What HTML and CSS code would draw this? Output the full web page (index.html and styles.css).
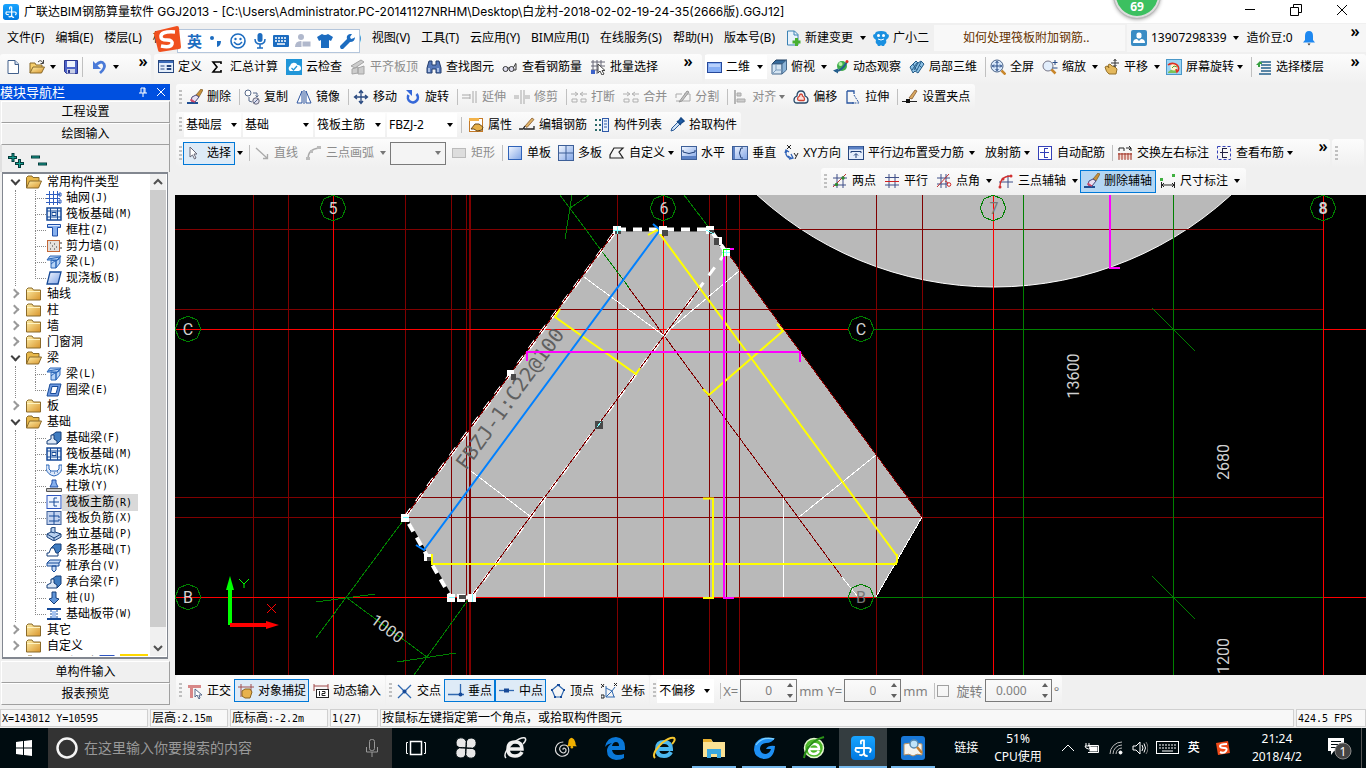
FILE: index.html
```html
<!DOCTYPE html>
<html lang="zh-CN">
<head>
<meta charset="utf-8">
<title>广联达BIM钢筋算量软件 GGJ2013</title>
<link rel="stylesheet" href="styles.css">
</head>
<body>
<svg class="sprite" aria-hidden="true">
  <defs>
    <linearGradient id="gold" x1="0" y1="0" x2="1" y2="1"><stop offset="0" stop-color="#fff0a8"/><stop offset="1" stop-color="#d8942c"/></linearGradient>
    <linearGradient id="blue" x1="0" y1="0" x2="1" y2="1"><stop offset="0" stop-color="#f4f8ff"/><stop offset="1" stop-color="#7fa4e6"/></linearGradient>
    <linearGradient id="app" x1="0" y1="0" x2="0" y2="1"><stop offset="0" stop-color="#18a4ff"/><stop offset="1" stop-color="#0078e0"/></linearGradient>
  </defs>
  <symbol id="applogo" viewBox="0 0 24 24"><rect width="24" height="24" rx="4" fill="url(#app)"/><path d="M13 4.500V17a3 3 0 0 0 3 3M5 12h13M13 4.500q-4-1-3 3M5 12q-2 4 3 4M18 12q3 1 1 4M13 17q-1 3-4 2" fill="none" stroke="#fff" stroke-width="1.800" stroke-linecap="round"/></symbol>
  <symbol id="new" viewBox="0 0 16 16"><path d="M3 1.500h7l3.500 3.500v9.500h-10.500z" fill="#fff" stroke="#43618c"/><path d="M10 1.500v4h3.500" fill="#cfdcf0" stroke="#43618c"/></symbol>
  <symbol id="open" viewBox="0 0 16 16"><path d="M1 14V4h5l1 2h6v3" fill="#f6cf6c" stroke="#8a6a2a"/><path d="M1 14l3-6h11.500l-3 6z" fill="url(#gold)" stroke="#8a6a2a"/><path d="M9 3q3-3 5 1M14.500 1v3.500h-3" fill="none" stroke="#444"/></symbol>
  <symbol id="save" viewBox="0 0 16 16"><path d="M1.500 1.500h13v13h-11l-2-2z" fill="#4d63c8" stroke="#29348c"/><rect x="4" y="2" width="8" height="6" fill="#eef2fc"/><rect x="4" y="10" width="8" height="4.500" fill="#c9cfe6"/><rect x="5" y="11" width="2" height="3" fill="#29348c"/></symbol>
  <symbol id="undo" viewBox="0 0 16 16"><path d="M4 6q5-5 8-1q2 4-4 9" fill="none" stroke="#4a7ad8" stroke-width="2.800"/><path d="M1 2v8h8z" fill="#4a7ad8"/></symbol>
  <symbol id="define" viewBox="0 0 16 16"><rect x=".5" y="1.500" width="15" height="12" fill="#e4eefb" stroke="#27477f"/><rect x="1" y="2" width="14" height="2" fill="#3c6bb8"/><path d="M2.500 7h4M2.500 10h4M9 6.500h4v1h-4zM9 9.500h4v1h-4z" stroke="#27477f"/></symbol>
  <symbol id="sum" viewBox="0 0 16 16"><path d="M11 5V3H3l4 5-4 5h8v-2" fill="none" stroke="#000" stroke-width="1.600"/></symbol>
  <symbol id="cloud" viewBox="0 0 16 16"><rect width="16" height="16" fill="#2196d8"/><path d="M4 12a3 3 0 0 1 0-5a4 4 0 0 1 7.500-1a3 3 0 0 1 1 6z" fill="#fff"/><path d="M5.500 9l2 2 3.500-4" fill="none" stroke="#2196d8" stroke-width="1.300"/></symbol>
  <symbol id="align3d" viewBox="0 0 16 16"><path d="M1 7l10-6 3 2-9 6zM2 15V10l6-2v6zM8 15V9l6-2v8z" fill="#ccc" stroke="#a4a4a4"/></symbol>
  <symbol id="bino" viewBox="0 0 16 16"><path d="M3 2h3v4h4V2h3l2 7v5h-5v-4H6v4H1V9z" fill="#5678b8" stroke="#233c6c"/><path d="M3 9v4M12 9v4" stroke="#c6d6f2" stroke-width="1.500"/></symbol>
  <symbol id="glasses" viewBox="0 0 16 16"><circle cx="3.500" cy="10" r="2.500" fill="#dde" stroke="#333"/><circle cx="9.500" cy="10" r="2.500" fill="#dde" stroke="#333"/><path d="M6 9h1M11.500 8.500L14 4M12 11h2V5" fill="none" stroke="#333"/></symbol>
  <symbol id="batch" viewBox="0 0 16 16"><path d="M1 3h14M1 7h14M1 11h9M3 1v14M7 1v14M11 1v6" stroke="#667"/><rect x="1" y="11" width="4" height="4" fill="#3d62c8"/><path d="M8 5v9l2-2 2 4 2-1-2-3.500h3z" fill="#fff" stroke="#444"/></symbol>
  <symbol id="rect2d" viewBox="0 0 16 16"><rect x=".5" y="3.500" width="14" height="10" fill="#86aef4" stroke="#26489a"/><path d="M2 5h11v3H2z" fill="#b8d0fb"/></symbol>
  <symbol id="cube" viewBox="0 0 16 16"><path d="M1 5l4-4h10.500L11 5z" fill="#376b9c" stroke="#1e3e60"/><path d="M1 5h10v10H1z" fill="#d4e4f2" stroke="#46698c"/><path d="M11 5l4.500-4v10L11 15z" fill="#8cb4d8" stroke="#46698c"/><path d="M5 5v6l-4 4M5 11h6" fill="none" stroke="#7a9cbc"/></symbol>
  <symbol id="orbit" viewBox="0 0 16 16"><circle cx="9" cy="7" r="5" fill="#3fae4a"/><circle cx="7.500" cy="5" r="2" fill="#b8efaa"/><path d="M2 12Q8 13 14 3" fill="none" stroke="#245e8c" stroke-width="2"/><path d="M0 11.500l5-2v5z" fill="#245e8c"/><circle cx="14" cy="2.500" r="1.500" fill="#e03020"/></symbol>
  <symbol id="local3d" viewBox="0 0 16 16"><path d="M1 8l6-6 2 2 3-2 3 3-6 9-3-2-2 2z" fill="#8cc0e4" stroke="#235a86"/><path d="M4 5l4 7M9 4l-4 7M12 3l-4 8M3 11l5-7M10 6l3 3" stroke="#235a86"/></symbol>
  <symbol id="full" viewBox="0 0 16 16"><circle cx="7" cy="7" r="6" fill="#d8e8fa" stroke="#4b6488"/><path d="M11.500 11.500l4 4" stroke="#c8862a" stroke-width="2.500"/><path d="M7 2v10M2 7h10M5.500 4L7 2.500 8.500 4M5.500 10L7 11.500 8.500 10M4 5.500L2.500 7 4 8.500M10 5.500L11.500 7 10 8.500" fill="none" stroke="#274a86"/></symbol>
  <symbol id="zoomi" viewBox="0 0 16 16"><circle cx="6" cy="7" r="5" fill="#e2eefc" stroke="#778"/><path d="M9.500 10.500l4 4" stroke="#c8862a" stroke-width="2.500"/><path d="M13 1v5M10.500 3.500h5M10.500 9h5" stroke="#274a86"/></symbol>
  <symbol id="pan" viewBox="0 0 16 16"><path d="M1 8l2-1 2 2-1-3 2-1 2 2 3 1 2 2-1 5H5q-3-2-4-7z" fill="#e4b85c" stroke="#94702a"/><path d="M11 0v8M7 4h8" stroke="#333"/><path d="M9.500 2L11 .5 12.500 2M9.500 6L11 7.500 12.500 6" fill="none" stroke="#333"/></symbol>
  <symbol id="scrrot" viewBox="0 0 16 16"><rect x=".5" y=".5" width="15" height="15" fill="#9bd4f4" stroke="#4a98c8"/><path d="M2 13q4-4 8-2v3H2z" fill="#7cc25a"/><circle cx="8" cy="8" r="3.500" fill="#fff6d0"/><path d="M2 6a6 5 0 1 1 9 7l-1-3" fill="none" stroke="#e03020" stroke-width="1.600"/><path d="M6 9l2-2 3 1" stroke="#5a9a3a" fill="none"/></symbol>
  <symbol id="floor" viewBox="0 0 16 16"><path d="M5 3h10M5 6h10M5 9h10M5 12h10M3 15h12" stroke="#26618c" stroke-width="1.500"/><path d="M0 6l4-4 2 2v1H4v3H2V6z" fill="#37a040"/></symbol>
  <symbol id="docplus" viewBox="0 0 16 16"><path d="M2.500 1h7L13 4.500V15H2.500z" fill="#e8f2fb" stroke="#3a82b4"/><path d="M9 1v4h4" fill="none" stroke="#3a82b4"/><path d="M10 8h3v2.500H15.500v3H13V16h-3v-2.500H7.500v-3H10z" fill="#48b030"/></symbol>
  <symbol id="mascot" viewBox="0 0 16 16"><path d="M0 6q0-2 2-2 0-3 6-3t6 3q2 0 2 2t-3 4q1 3-1 4l-1 2H9l-1-1-1 1H5l-1-2q-2-1-1-4-3-2-3-4z" fill="#1a90e0"/><circle cx="5.500" cy="5.500" r="1.500" fill="#fff"/><circle cx="10.500" cy="5.500" r="1.500" fill="#fff"/><path d="M5 9q3 2 6 0" fill="none" stroke="#fff"/></symbol>
  <symbol id="user" viewBox="0 0 16 16"><rect width="16" height="16" rx="2" fill="#3a8cc4"/><rect x="5.500" y="2.500" width="5" height="6" rx="2" fill="#fff"/><path d="M2 13q0-4 4-4l2 2 2-2q4 0 4 4z" fill="#fff"/></symbol>
  <symbol id="bell" viewBox="0 0 14 16"><path d="M7 1q-4 0-4 5v4l-2 2.500h12L11 10V6q0-5-4-5z" fill="#1e88f0"/><path d="M5.500 13.500h3L7 15.500z" fill="#333"/></symbol>
  <symbol id="brush" viewBox="0 0 16 16"><path d="M0 14h11" stroke="#1f4f94" stroke-width="2"/><path d="M9 6l5-6 2 1-4 7z" fill="#c89038" stroke="#6a4a1a" stroke-width=".6"/><path d="M5 8l4-2 3 2-4 5-4-1z" fill="#e8e0f2" stroke="#4a4a7a"/><path d="M4 10l4 3-4-1z" fill="#d04868" stroke="#d04868"/></symbol>
  <symbol id="copy" viewBox="0 0 16 16"><circle cx="4" cy="4" r="3" fill="#fff" stroke="#56698a"/><circle cx="12" cy="12" r="3.200" fill="#dde" stroke="#667"/><path d="M9 4h4v4M11.500 6.500L13 8l1.500-1.500M5 8v4l3 1M10 14l4-4" fill="none" stroke="#56698a"/></symbol>
  <symbol id="mirror" viewBox="0 0 16 16"><path d="M6 2v12H1zM10 2v12h5z" fill="#fff" stroke="#2f56a0"/><path d="M8 1v14" stroke="#2f56a0"/></symbol>
  <symbol id="move" viewBox="0 0 16 16"><path d="M8 2v12M2 8h12M6 4l2-2.500L10 4M6 12l2 2.500 2-2.500M4 6L1.500 8 4 10M12 6l2.500 2-2.500 2" fill="none" stroke="#2a4a80" stroke-width="1.300"/></symbol>
  <symbol id="rot" viewBox="0 0 16 16"><path d="M3.500 6a5 5 0 1 0 8-1" fill="none" stroke="#3668d8" stroke-width="2.600"/><path d="M1 1h6v6z" fill="#3668d8"/></symbol>
  <symbol id="extend" viewBox="0 0 16 16"><path d="M0 6h8M0 9h8M8 5v5M11 2v12M14 2v12" stroke="#a8a8a8" fill="none"/></symbol>
  <symbol id="trim" viewBox="0 0 16 16"><path d="M0 7h5M0 9h5M11 7h5M11 9h5M7 1v14M10 1v14" stroke="#a8a8a8"/></symbol>
  <symbol id="brk" viewBox="0 0 16 16"><path d="M0 5h6M10 5h6M4 3l3 2-3 2M12 3L9 5l3 2M1 10h5v3H1zM10 10h5v3h-5z" fill="none" stroke="#b0b0b0"/></symbol>
  <symbol id="split" viewBox="0 0 16 16"><path d="M1 9V5h6M9 5h6v7H1" fill="none" stroke="#aaa"/><path d="M4 13l8-11 2 1-7 9z" fill="#c4c4c4" stroke="#999"/></symbol>
  <symbol id="alignl" viewBox="0 0 16 16"><path d="M3 1v14" stroke="#a0a0a0" stroke-width="1.500"/><path d="M5 4h4v3H5zM5 10h8v3H5z" fill="#ccc" stroke="#aaa"/></symbol>
  <symbol id="offset" viewBox="0 0 16 16"><path d="M1 11q0-3 3-4q0-5 4-5t4 5q3 1 3 4t-3 3H4q-3 0-3-3z" fill="#f2f6fa" stroke="#2a4a6a" stroke-width="1.300"/><path d="M4.500 10q0-2 2-3q0-2 1.500-2t1.500 2q2 1 2 3t-2 1.500h-3q-2 0-2-1.500z" fill="#fbe0da" stroke="#d04030" stroke-width="1.300"/></symbol>
  <symbol id="stretch" viewBox="0 0 16 16"><path d="M2 2h7v3M2 2v12h7" fill="none" stroke="#2a56a0" stroke-width="1.300"/><path d="M9 6l5 8H7" fill="none" stroke="#2a56a0" stroke-dasharray="2 1"/></symbol>
  <symbol id="grip" viewBox="0 0 16 16"><path d="M0 12.500h4M7 12.500h8" stroke="#222"/><rect x="4" y="10" width="4" height="4" fill="#111"/><path d="M7 9l6-8 2 1-5 8z" fill="#d8a860" stroke="#7a4a20" stroke-width=".7"/></symbol>
  <symbol id="prop" viewBox="0 0 16 16"><rect x="1.500" y="1.500" width="13" height="13" fill="#fff" stroke="#c47a28"/><rect x="1" y="1" width="10" height="3" fill="#f2b24a"/><path d="M3 12l4-5 4 0 4 3-1 3-5 1-3-2z" fill="#e6b048" stroke="#6a4a1a"/></symbol>
  <symbol id="editbar" viewBox="0 0 16 16"><path d="M0 12h4l2-3M5 12h10V9" fill="none" stroke="#222" stroke-width="1.300"/><path d="M6 9l7-8 2 1.500-7 8z" fill="#e0b468" stroke="#7a4a20" stroke-width=".7"/></symbol>
  <symbol id="list" viewBox="0 0 16 16"><path d="M1 3h2M5 3h2M1 8h2M5 8h2M1 13h2M5 13h2" stroke="#2b6a6a" stroke-width="2"/><rect x="8.500" y="1.500" width="6" height="13" fill="#e8f0fb" stroke="#2f5aa8"/><path d="M10 4h3M10 7h3M10 10h3" stroke="#2f5aa8"/></symbol>
  <symbol id="pick" viewBox="0 0 16 16"><path d="M2 14l1-3 6-6 2 2-6 6z" fill="#cfe2f6" stroke="#2a5a98"/><path d="M8 4l4 4M9 5l3-4 3 3-4 3z" fill="#1f5faa" stroke="#174a88" stroke-width="1.500"/></symbol>
  <symbol id="cursor" viewBox="0 0 16 16"><path d="M3 2v10l2.500-2 2 4 1.500-1-2-4H10z" fill="#fff" stroke="#667"/></symbol>
  <symbol id="line" viewBox="0 0 16 16"><path d="M2 3l11 10M13.500 9v4.500H9" fill="none" stroke="#aaa" stroke-width="1.300"/></symbol>
  <symbol id="arc" viewBox="0 0 16 16"><path d="M2 14Q2 4 13 3" fill="none" stroke="#aaa" stroke-width="1.500"/><path d="M0 12h4v3H0zM4 5h3v3H4zM11 1h4v3h-4z" fill="#bbb"/></symbol>
  <symbol id="rectg" viewBox="0 0 16 16"><rect x="1.500" y="3.500" width="13" height="9" fill="#ddd" stroke="#bbb"/></symbol>
  <symbol id="single" viewBox="0 0 16 16"><rect x="1.500" y="1.500" width="13" height="13" fill="url(#blue)" stroke="#2f62b8"/></symbol>
  <symbol id="multi" viewBox="0 0 16 16"><rect x=".5" y=".5" width="15" height="15" fill="url(#blue)" stroke="#3d5f98"/><path d="M8 1v14M1 8h14" stroke="#3d5f98"/></symbol>
  <symbol id="poly" viewBox="0 0 16 16"><path d="M1 13V10l4-7h9l-4 4 4 6z" fill="none" stroke="#222" stroke-width="1.200"/></symbol>
  <symbol id="horiz" viewBox="0 0 16 16"><rect x=".5" y="1.500" width="15" height="13" fill="url(#blue)" stroke="#3d5f98"/><path d="M2 5v2q6 3 12 0V5" fill="none" stroke="#1f3f78"/><path d="M1 11h14v3H1z" fill="#5a80c4"/></symbol>
  <symbol id="vert" viewBox="0 0 16 16"><rect x=".5" y="1.500" width="15" height="13" fill="url(#blue)" stroke="#3d5f98"/><path d="M11 3H9q-3 5 0 10h2" fill="none" stroke="#1f3f78"/><path d="M2 2v12" stroke="#5a80c4" stroke-width="2"/></symbol>
  <symbol id="xy" viewBox="0 0 16 16"><path d="M4 0l4 4M8 0L4 4M11 8l2 3M15 8l-3 6" stroke="#222" fill="none"/><path d="M4 6Q1 9 6 13M2 8l1-3 3 2M8 13l-3-2M8 9l2 4-4 1" fill="none" stroke="#2f62b8" stroke-width="1.300"/></symbol>
  <symbol id="parside" viewBox="0 0 16 16"><rect x=".5" y="1.500" width="15" height="13" fill="#e4edfb" stroke="#27477f"/><path d="M1 3h14" stroke="#5a80c4" stroke-width="3"/><path d="M3 8V6.500h10V8M8 13V9M6 10.500L8 8.500l2 2" fill="none" stroke="#1f3f78"/></symbol>
  <symbol id="auto" viewBox="0 0 16 16"><rect x="1.500" y="1.500" width="13" height="13" fill="#fff" stroke="#3340b8"/><path d="M7.500 3v10M3 7.500h9M8 3.500h3M8 12.500h3" stroke="#3340b8" fill="none"/></symbol>
  <symbol id="viewbar" viewBox="0 0 16 16"><rect x="1.500" y="1.500" width="13" height="13" fill="none" stroke="#3340b8" stroke-dasharray="3 2"/><path d="M6.500 3v10M4 7.500h8M7 3.500h4M7 12.500h4" stroke="#224" fill="none"/></symbol>
  <symbol id="swap" viewBox="0 0 16 16"><path d="M2 6V3h5v3M9 3h5v3M12 1l2 2-2 2" fill="none" stroke="#222"/><path d="M1 8h14v6H1z" fill="#f4d8d0"/><path d="M2 8v7M5 8v7M8 8v7M11 8v7M14 8v7M1 9h14" stroke="#a03428"/></symbol>
  <symbol id="twopt" viewBox="0 0 16 16"><path d="M5 1v14M11 3v12M1 5h14M1 12h13" stroke="#3f4f88"/><path d="M1 14L14 1" stroke="#c03030"/><circle cx="4.500" cy="11.500" r="1.700" fill="#2f8a30"/><circle cx="11" cy="5" r="1.700" fill="#2f8a30"/></symbol>
  <symbol id="para" viewBox="0 0 16 16"><path d="M5 1v14M11 1v14M1 4.500h14M1 12h14" stroke="#3f4f88"/><path d="M1 8.500h14" stroke="#d02020"/></symbol>
  <symbol id="ptang" viewBox="0 0 16 16"><path d="M5 1v14M10 1v14M1 5h13M1 11h13" stroke="#3f4f88"/><path d="M1 14L13 1M9 8q4 1 3 4" stroke="#c03030" fill="none"/><circle cx="13" cy="11.500" r="1.800" fill="#fff" stroke="#d02020"/></symbol>
  <symbol id="threept" viewBox="0 0 16 16"><path d="M10 2v13M1 9h14" stroke="#3f4f88"/><path d="M2 14Q2 3 13 3" fill="none" stroke="#d03030" stroke-width="1.300"/><circle cx="2" cy="14" r="1.500" fill="#d03030"/><circle cx="5" cy="6" r="1.500" fill="#d03030"/><circle cx="13" cy="3" r="1.500" fill="#d03030"/></symbol>
  <symbol id="dim" viewBox="0 0 16 16"><path d="M1.500 9v6M14.500 9v6M2 12h12M4 10l-2 2 2 2M12 10l2 2-2 2" fill="none" stroke="#222"/><rect x="0" y="5" width="3" height="3" fill="#40b040"/><rect x="12" y="1" width="3" height="3" fill="#40b040"/></symbol>
  <symbol id="ortho" viewBox="0 0 16 16"><path d="M1 2h13v3H6v10H3V5H1z" fill="#d88888"/><path d="M8 6v8l2-2 2 4 1-1-1-3h3z" fill="#fff" stroke="#56698a"/></symbol>
  <symbol id="snap" viewBox="0 0 16 16"><path d="M3 1v13M13 1v10M0 4h16" stroke="#a05050"/><path d="M4 13V8l3-2 5 0 2 3-2 6H7z" fill="#e8b24c" stroke="#8a6420"/></symbol>
  <symbol id="dyn" viewBox="0 0 16 16"><path d="M1 1v7M15 1v7M1 3h14" stroke="#a04848"/><rect x="3.500" y="6.500" width="12" height="8" fill="#fff" stroke="#222"/><path d="M6.500 8v5M9 8.500h3v2H9v2h3.500" fill="none" stroke="#222"/></symbol>
  <symbol id="cross" viewBox="0 0 16 16"><path d="M1 2l13 13M14 2L1 15" stroke="#2f68b0" stroke-width="1.300"/><circle cx="7.500" cy="8.500" r="2" fill="#174a98"/></symbol>
  <symbol id="perp" viewBox="0 0 16 16"><path d="M0 11.500h16M12.500 1v10" stroke="#2f68b0" stroke-width="1.300"/><circle cx="12.500" cy="11.500" r="2" fill="#174a98"/></symbol>
  <symbol id="mid" viewBox="0 0 16 16"><path d="M0 7.500h15" stroke="#2f68b0" stroke-width="1.300"/><rect x="5" y="5.500" width="5" height="4" fill="#174a98"/></symbol>
  <symbol id="vertex" viewBox="0 0 16 16"><path d="M8 2l6 5-3 7H5L2 7z" fill="none" stroke="#2f68b0" stroke-width="1.200"/><path d="M7 1h3v2H7zM1 6h2v2H1zM13 6h2v2h-2zM4 13h2v2H4zM10 13h2v2h-2z" fill="#174a98"/></symbol>
  <symbol id="coord" viewBox="0 0 16 16"><path d="M5 3v11h9M5 5l6 3 3-4M5 14l6-6M11 8l2 6" fill="none" stroke="#2f68b0"/><path d="M0 1l3 3M3 1L0 5M13 0l3 3M16 0l-3 3M0 12h3v3H0z" stroke="#222" fill="none"/></symbol>
  <symbol id="folder" viewBox="0 0 16 14"><path d="M.5 13V2.500L2 1h4l1.500 2h7v10z" fill="url(#gold)" stroke="#8a6a2a"/><path d="M1 4.500h13" stroke="#fff3c0"/></symbol>
  <symbol id="folderopen" viewBox="0 0 16 14"><path d="M.5 13V2.500L2 1h4l1 1.500h6V6" fill="#e8b84a" stroke="#8a6a2a"/><path d="M.5 13l3-7h12l-3 7z" fill="url(#gold)" stroke="#8a6a2a"/></symbol>
  <symbol id="t-axis" viewBox="0 0 16 14"><path d="M3.500 0v14M7.500 0v14M11.500 0v14M0 3.500h14M0 7.500h14M0 11.500h14" stroke="#2f5ec0"/><path d="M13 2h2v3h-2zM13 9h2v3h-2z" fill="none" stroke="#2f5ec0"/></symbol>
  <symbol id="t-raft" viewBox="0 0 16 14"><rect x="1" y="1" width="14" height="12" fill="#e6f0fc" stroke="#174a98" stroke-width="1.500"/><path d="M4.500 1v12M11.500 1v12M1 4h14M1 10h14" stroke="#174a98"/><rect x="6" y="5.500" width="4" height="3" fill="#fff" stroke="#174a98"/></symbol>
  <symbol id="t-col" viewBox="0 0 16 14"><path d="M1.500 1.500h13v3h-3v8.500h-5V4.500h-5z" fill="#86b0ee" stroke="#1f4fa8"/><path d="M2 2.500h12" stroke="#e0ecff"/></symbol>
  <symbol id="t-wall" viewBox="0 0 16 14"><rect x="1.500" y="1.500" width="12" height="11" fill="#e4e0dc" stroke="#c46838"/><path d="M4 4h1M8 5h1M6 7h1M10 8h1M4 10h1M8 10h1M14 4h2M14 9h2" stroke="#333"/></symbol>
  <symbol id="t-beam" viewBox="0 0 16 14"><path d="M1 5l3-4h11l-3 4zM5 5v8h5V6zM10 6l4-4v6l-4 5z" fill="#b8d4f6" stroke="#2a66b8"/><path d="M5 9l5-4M2 4l12-2" fill="none" stroke="#2a66b8"/></symbol>
  <symbol id="t-slab" viewBox="0 0 16 14"><path d="M4 1h11l-3 12H1z" fill="url(#blue)" stroke="#174a98" stroke-width="1.300"/></symbol>
  <symbol id="t-ring" viewBox="0 0 16 14"><path d="M4 1h11l-3 12H1z" fill="#6f9ae0" stroke="#174a98"/><path d="M6 3.500h6l-2 7H4.500z" fill="#fff" stroke="#174a98"/></symbol>
  <symbol id="t-fbeam" viewBox="0 0 16 14"><path d="M5 5l5-4h5v8l-4 4z" fill="#3f7cc0" stroke="#173f78"/><path d="M1 13v-3l4-2V4h3v4l3 2v3z" fill="#dce8f6" stroke="#173f78"/></symbol>
  <symbol id="t-pit" viewBox="0 0 16 14"><path d="M0 2h3v4l2 2h6l2-2V2h3v4q-2 6-8 7Q2 12 0 6z" fill="#dce8fa" stroke="#2a66b8"/><path d="M4 9h1M8 10h1M11 9h1" stroke="#174a98"/></symbol>
  <symbol id="t-pier" viewBox="0 0 16 14"><path d="M6 1h4v3l2 4H4l2-4z" fill="#86b0ee" stroke="#1f4fa8"/><path d="M.5 9.500h15v3H.5z" fill="#c8c8c8" stroke="#555"/></symbol>
  <symbol id="t-main" viewBox="0 0 16 14"><rect x="1" y=".5" width="14" height="13" fill="#eef4ff" stroke="#2f56c0"/><path d="M8 3v8h3M8 3h3M3 7h10" fill="none" stroke="#174a98"/></symbol>
  <symbol id="t-neg" viewBox="0 0 16 14"><rect x="1" y=".5" width="14" height="13" fill="#c4d4f0" stroke="#3d5f98"/><path d="M8 1v12M3 5h10v2M3 10h10V8" fill="none" stroke="#174a98"/></symbol>
  <symbol id="t-iso" viewBox="0 0 16 14"><path d="M1 7l4-2V1l4-1v5l6 2v3l-7 4-7-4z" fill="#b8d0ee" stroke="#173f78"/><path d="M1 7l7 4 7-4M8 11v3M5 5l4 1" fill="none" stroke="#173f78"/></symbol>
  <symbol id="t-strip" viewBox="0 0 16 14"><path d="M5 5l4-4h6v6l-4 4" fill="#3f7cc0" stroke="#173f78"/><path d="M1 13v-3h2l2-5h3l2 5h2v3z" fill="#fff" stroke="#173f78"/></symbol>
  <symbol id="t-cap" viewBox="0 0 16 14"><path d="M1 4l3-3h11l-2 3v3H1zM6 7h4v4l-2 2-2-2z" fill="#c8dcf6" stroke="#174a98"/><path d="M1 4h12" stroke="#174a98"/></symbol>
  <symbol id="t-pile" viewBox="0 0 16 14"><path d="M6 1h4v6l3 1-5 5-5-5 3-1z" fill="#5f94d8" stroke="#173f78"/></symbol>
  <symbol id="t-band" viewBox="0 0 16 14"><path d="M1 2h14M1 12h14" stroke="#174a98" stroke-width="2"/><path d="M5 3v8M11 3v8" stroke="#174a98" stroke-dasharray="2 1"/><path d="M6 4h4v7H6z" fill="#a8c4f0"/></symbol>
</svg>

<header class="titlebar">
  <svg class="i"><use href="#applogo"/></svg>
  <h1>广联达BIM钢筋算量软件 GGJ2013 - [C:\Users\Administrator.PC-20141127NRHM\Desktop\白龙村-2018-02-02-19-24-35(2666版).GGJ12]</h1>
  <div class="ball">69</div>
  <button class="win" aria-label="最小化"><svg viewBox="0 0 12 12"><path d="M1 5.500h10"/></svg></button>
  <button class="win" aria-label="还原"><svg viewBox="0 0 12 12"><path d="M3.500 3V.5h8v8H9M.5 3.500h8v8h-8z"/></svg></button>
  <button class="win" aria-label="关闭"><svg viewBox="0 0 12 12"><path d="M1 1l10 10M11 1L1 11"/></svg></button>
</header>

<nav class="menubar">
  <button>文件(F)</button><button>编辑(E)</button><button>楼层(L)</button><button>构件(N)</button><button>绘图(D)</button><button>修改(M)</button><button>钢筋量(Q)</button><button>视图(V)</button><button>工具(T)</button><button>云应用(Y)</button><button>BIM应用(I)</button><button>在线服务(S)</button><button>帮助(H)</button><button>版本号(B)</button>
  <button class="t"><svg class="i"><use href="#docplus"/></svg>新建变更</button><button class="dd" aria-label="展开"></button>
  <button class="t"><svg class="i"><use href="#mascot"/></svg>广小二</button>
  <a class="tip" href="#">如何处理筏板附加钢筋..</a>
  <div class="account">
    <button class="t"><svg class="i"><use href="#user"/></svg>13907298339</button><button class="dd" aria-label="展开"></button>
    <span class="beans">造价豆:0</span>
    <button class="bellbtn" aria-label="通知"><svg class="i"><use href="#bell"/></svg></button>
    <button class="more">»</button>
  </div>
  <div class="ime">
    <svg class="imelogo" viewBox="0 0 28 28"><path d="M3 6L24 1q2 0 2 2l2 19q0 2-2 2L7 27q-2 0-2-2L1 9q0-2 2-3z" fill="#f0501e"/><path d="M22 7Q7 6 8 12q0 3 6 3t5 4q-1 4-11 2" fill="none" stroke="#fff" stroke-width="3.500"/></svg>
    <b>英</b>
    <svg viewBox="0 0 16 16"><circle cx="4" cy="5" r="2"/><path d="M9 8h4q0 5-4 6z"/></svg>
    <svg viewBox="0 0 16 16"><circle cx="8" cy="8" r="7" fill="none" stroke="#1c6cc0" stroke-width="1.600"/><circle cx="5.500" cy="6" r="1.200"/><circle cx="10.500" cy="6" r="1.200"/><path d="M4 9q4 5 8 0" fill="none" stroke="#1c6cc0" stroke-width="1.500"/></svg>
    <svg viewBox="0 0 16 16"><rect x="5.500" y="0" width="5" height="9" rx="2.500"/><path d="M3 6q0 5 5 5t5-5M8 11v4M5 15h6" fill="none" stroke="#1c6cc0" stroke-width="1.500"/></svg>
    <svg viewBox="0 0 16 16"><rect x="0" y="2" width="16" height="12" rx="1"/><path d="M2 5h12M2 8h12" stroke="#fff" stroke-width="1.500" stroke-dasharray="2 1"/><path d="M4 11h8" stroke="#fff" stroke-width="1.500"/></svg>
    <svg viewBox="0 0 16 16" class="pale"><circle cx="6" cy="4" r="3"/><path d="M0 14q0-6 6-6l3 1v5z"/><rect x="7" y="8" width="9" height="6" stroke="#fff"/></svg>
    <svg viewBox="0 0 16 16"><path d="M5 1q3 2 6 0l5 3-2 4-2-1v8H4V7L2 8 0 4z"/></svg>
    <svg viewBox="0 0 16 16"><path d="M1 13l7-7q-1-4 3-5l2 0-2 3 1 2 3-1 1-1q0 5-5 5l-7 7q-3 1-3-3z"/></svg>
  </div>
</nav>

<div class="maintools">
  <div class="tb file">
    <button class="t" aria-label="新建"><svg class="i"><use href="#new"/></svg></button>
    <button class="t" aria-label="打开"><svg class="i"><use href="#open"/></svg></button><button class="dd" aria-label="展开"></button>
    <button class="t" aria-label="保存"><svg class="i"><use href="#save"/></svg></button>
    <i class="sep"></i>
    <button class="t" aria-label="撤销"><svg class="i"><use href="#undo"/></svg></button><button class="dd" aria-label="展开"></button>
    <button class="more">»</button>
  </div>
  <div class="tb calc">
    <button class="t"><svg class="i"><use href="#define"/></svg>定义</button>
    <button class="t"><svg class="i"><use href="#sum"/></svg>汇总计算</button>
    <button class="t"><svg class="i"><use href="#cloud"/></svg>云检查</button>
    <button class="t" disabled><svg class="i"><use href="#align3d"/></svg>平齐板顶</button>
    <button class="t"><svg class="i"><use href="#bino"/></svg>查找图元</button>
    <button class="t"><svg class="i"><use href="#glasses"/></svg>查看钢筋量</button>
    <button class="t"><svg class="i"><use href="#batch"/></svg>批量选择</button>
    <button class="more">»</button>
  </div>
  <div class="tb view">
    <label class="combo dim"><svg class="i"><use href="#rect2d"/></svg><select aria-label="视图维度"><option>二维</option></select></label>
    <button class="t"><svg class="i"><use href="#cube"/></svg>俯视</button><button class="dd" aria-label="展开"></button>
    <button class="t"><svg class="i"><use href="#orbit"/></svg>动态观察</button>
    <button class="t"><svg class="i"><use href="#local3d"/></svg>局部三维</button>
    <i class="sep"></i>
    <button class="t"><svg class="i"><use href="#full"/></svg>全屏</button>
    <button class="t"><svg class="i"><use href="#zoomi"/></svg>缩放</button><button class="dd" aria-label="展开"></button>
    <button class="t"><svg class="i"><use href="#pan"/></svg>平移</button><button class="dd" aria-label="展开"></button>
    <button class="t drop"><svg class="i"><use href="#scrrot"/></svg>屏幕旋转</button>
    <i class="sep"></i>
    <button class="t"><svg class="i"><use href="#floor"/></svg>选择楼层</button>
    <button class="more">»</button>
  </div>
</div>

<main class="work">
  <aside class="side">
    <header>模块导航栏
      <svg viewBox="0 0 10 10" class="pin"><path d="M3 1h4v5M3 1v5M1 6h8M5 6v4M6 1v5"/></svg>
      <svg viewBox="0 0 10 10"><path d="M1 1l8 8M9 1L1 9"/></svg>
    </header>
    <button class="sec">工程设置</button>
    <button class="sec">绘图输入</button>
    <div class="expand">
      <button aria-label="全部展开"><svg viewBox="0 0 16 16"><path d="M5 0v9M0 4.500h9M11.500 6v9M7 10.500h9" stroke="#053c3c" stroke-width="3"/><path d="M5 1v7M1 4.500h7M11.500 7v7M8 10.500h7" stroke="#18a090"/></svg></button>
      <button aria-label="全部折叠"><svg viewBox="0 0 16 16"><path d="M0 4h9M7 11h9" stroke="#053c3c" stroke-width="3"/><path d="M1 4h7M8 11h7" stroke="#18a090"/></svg></button>
    </div>
    <div class="treebox">
      <ul class="tree">
        <li class="open"><span><svg class="f"><use href="#folderopen"/></svg>常用构件类型</span>
          <ul>
            <li><svg class="f"><use href="#t-axis"/></svg>轴网<tt>(J)</tt></li>
            <li><svg class="f"><use href="#t-raft"/></svg>筏板基础<tt>(M)</tt></li>
            <li><svg class="f"><use href="#t-col"/></svg>框柱<tt>(Z)</tt></li>
            <li><svg class="f"><use href="#t-wall"/></svg>剪力墙<tt>(Q)</tt></li>
            <li><svg class="f"><use href="#t-beam"/></svg>梁<tt>(L)</tt></li>
            <li><svg class="f"><use href="#t-slab"/></svg>现浇板<tt>(B)</tt></li>
          </ul></li>
        <li><span><svg class="f"><use href="#folder"/></svg>轴线</span></li>
        <li><span><svg class="f"><use href="#folder"/></svg>柱</span></li>
        <li><span><svg class="f"><use href="#folder"/></svg>墙</span></li>
        <li><span><svg class="f"><use href="#folder"/></svg>门窗洞</span></li>
        <li class="open"><span><svg class="f"><use href="#folderopen"/></svg>梁</span>
          <ul>
            <li><svg class="f"><use href="#t-beam"/></svg>梁<tt>(L)</tt></li>
            <li><svg class="f"><use href="#t-ring"/></svg>圈梁<tt>(E)</tt></li>
          </ul></li>
        <li><span><svg class="f"><use href="#folder"/></svg>板</span></li>
        <li class="open"><span><svg class="f"><use href="#folderopen"/></svg>基础</span>
          <ul>
            <li><svg class="f"><use href="#t-fbeam"/></svg>基础梁<tt>(F)</tt></li>
            <li><svg class="f"><use href="#t-raft"/></svg>筏板基础<tt>(M)</tt></li>
            <li><svg class="f"><use href="#t-pit"/></svg>集水坑<tt>(K)</tt></li>
            <li><svg class="f"><use href="#t-pier"/></svg>柱墩<tt>(Y)</tt></li>
            <li class="cur"><svg class="f"><use href="#t-main"/></svg><em>筏板主筋<tt>(R)</tt></em></li>
            <li><svg class="f"><use href="#t-neg"/></svg>筏板负筋<tt>(X)</tt></li>
            <li><svg class="f"><use href="#t-iso"/></svg>独立基础<tt>(P)</tt></li>
            <li><svg class="f"><use href="#t-strip"/></svg>条形基础<tt>(T)</tt></li>
            <li><svg class="f"><use href="#t-cap"/></svg>桩承台<tt>(V)</tt></li>
            <li><svg class="f"><use href="#t-fbeam"/></svg>承台梁<tt>(F)</tt></li>
            <li><svg class="f"><use href="#t-pile"/></svg>桩<tt>(U)</tt></li>
            <li><svg class="f"><use href="#t-band"/></svg>基础板带<tt>(W)</tt></li>
          </ul></li>
        <li><span><svg class="f"><use href="#folder"/></svg>其它</span></li>
        <li><span><svg class="f"><use href="#folder"/></svg>自定义</span></li>
        <li class="last"><span><svg class="f"><use href="#folder"/></svg><tt>CAD</tt>识别<svg class="f"><use href="#t-main"/></svg><mark>NEW</mark></span></li>
      </ul>
      <div class="scroll">
        <button aria-label="向上"><svg viewBox="0 0 10 10"><path d="M1 7l4-4 4 4"/></svg></button>
        <div class="track"><div class="thumb"></div></div>
        <button aria-label="向下"><svg viewBox="0 0 10 10"><path d="M1 3l4 4 4-4"/></svg></button>
      </div>
    </div>
    <button class="sec">单构件输入</button>
    <button class="sec">报表预览</button>
  </aside>

  <section class="stage">
    <div class="row edit"><div class="tb"><i class="hand"></i>
      <button class="t"><svg class="i"><use href="#brush"/></svg>删除</button><i class="sep"></i>
      <button class="t"><svg class="i"><use href="#copy"/></svg>复制</button>
      <button class="t"><svg class="i"><use href="#mirror"/></svg>镜像</button><i class="sep"></i>
      <button class="t"><svg class="i"><use href="#move"/></svg>移动</button>
      <button class="t"><svg class="i"><use href="#rot"/></svg>旋转</button><i class="sep"></i>
      <button class="t" disabled><svg class="i"><use href="#extend"/></svg>延伸</button>
      <button class="t" disabled><svg class="i"><use href="#trim"/></svg>修剪</button><i class="sep"></i>
      <button class="t" disabled><svg class="i"><use href="#brk"/></svg>打断</button>
      <button class="t" disabled><svg class="i"><use href="#brk"/></svg>合并</button>
      <button class="t" disabled><svg class="i"><use href="#split"/></svg>分割</button><i class="sep"></i>
      <button class="t drop" disabled><svg class="i"><use href="#alignl"/></svg>对齐</button>
      <button class="t"><svg class="i"><use href="#offset"/></svg>偏移</button>
      <button class="t"><svg class="i"><use href="#stretch"/></svg>拉伸</button><i class="sep"></i>
      <button class="t"><svg class="i"><use href="#grip"/></svg>设置夹点</button>
    </div></div>

    <div class="row comp"><div class="tb"><i class="hand"></i>
      <label class="combo s"><select aria-label="楼层"><option>基础层</option></select></label>
      <label class="combo"><select aria-label="构件类别"><option>基础</option></select></label>
      <label class="combo"><select aria-label="构件类型"><option>筏板主筋</option></select></label>
      <label class="combo"><select aria-label="构件名称"><option>FBZJ-2</option></select></label>
      <i class="sep"></i>
      <button class="t"><svg class="i"><use href="#prop"/></svg>属性</button>
      <button class="t"><svg class="i"><use href="#editbar"/></svg>编辑钢筋</button>
      <button class="t"><svg class="i"><use href="#list"/></svg>构件列表</button>
      <button class="t"><svg class="i"><use href="#pick"/></svg>拾取构件</button>
    </div></div>

    <div class="row draw"><div class="tb"><i class="hand"></i>
      <button class="t on"><svg class="i"><use href="#cursor"/></svg>选择</button><button class="dd" aria-label="展开"></button><i class="sep"></i>
      <button class="t" disabled><svg class="i"><use href="#line"/></svg>直线</button>
      <button class="t" disabled><svg class="i"><use href="#arc"/></svg>三点画弧</button><button class="dd gray" aria-label="展开"></button>
      <label class="combo boxed"><select aria-label="画弧参数"><option></option></select></label>
      <button class="t" disabled><svg class="i"><use href="#rectg"/></svg>矩形</button><i class="sep"></i>
      <button class="t"><svg class="i"><use href="#single"/></svg>单板</button>
      <button class="t"><svg class="i"><use href="#multi"/></svg>多板</button>
      <button class="t drop"><svg class="i"><use href="#poly"/></svg>自定义</button>
      <button class="t"><svg class="i"><use href="#horiz"/></svg>水平</button>
      <button class="t"><svg class="i"><use href="#vert"/></svg>垂直</button>
      <button class="t"><svg class="i"><use href="#xy"/></svg>XY方向</button>
      <button class="t"><svg class="i"><use href="#parside"/></svg>平行边布置受力筋</button><button class="dd" aria-label="展开"></button>
      <button class="t drop bare">放射筋</button>
      <button class="t"><svg class="i"><use href="#auto"/></svg>自动配筋</button><i class="sep"></i>
      <button class="t"><svg class="i"><use href="#swap"/></svg>交换左右标注</button>
      <button class="t drop"><svg class="i"><use href="#viewbar"/></svg>查看布筋</button>
      <button class="more">»</button>
    </div><div class="tb stub"><i class="hand"></i></div></div>

    <div class="row aux"><div class="tb"><i class="hand"></i>
      <button class="t"><svg class="i"><use href="#twopt"/></svg>两点</button>
      <button class="t"><svg class="i"><use href="#para"/></svg>平行</button>
      <button class="t"><svg class="i"><use href="#ptang"/></svg>点角</button><button class="dd" aria-label="展开"></button>
      <button class="t"><svg class="i"><use href="#threept"/></svg>三点辅轴</button><button class="dd" aria-label="展开"></button>
      <button class="t on deep"><svg class="i"><use href="#brush"/></svg>删除辅轴</button>
      <button class="t"><svg class="i"><use href="#dim"/></svg>尺寸标注</button><button class="dd" aria-label="展开"></button>
    </div></div>

    <svg class="cad" viewBox="175 195 1191 480" preserveAspectRatio="xMinYMin slice">
      <rect x="175" y="195" width="1191" height="480" fill="#000"/>
      <g fill="#b9b9b9">
        <path d="M617 229H710L922 517L876 597H451L405 517Z"/>
        <circle cx="994" cy="-64" r="351" stroke="#fff"/>
      </g>
      <g class="crisp">
        <g stroke="#800000">
          <path d="M253.500 195v480M288.500 195v480M405.500 195v480M451.500 195v480M466.500 195v480M617.500 195v480M709.500 195v480M726.500 195v480M739.500 195v480M876.500 195v480M922.500 195v480"/>
          <path d="M470 195v480" stroke-width="2"/>
          <path d="M175 229.500h1148M175 309.500h1148M175 497.500h1148M175 517.500h1148"/>
        </g>
        <path stroke="#f00" d="M333.500 195v480M663.500 195v480M993.500 195v480M1323.500 195v480M175 329.500h673M175 597.500h701M1323 329.500h43M1323 597.500h43"/>
        <path stroke="#008000" d="M1023.500 195v480M1173.500 195v480M874 329.500h449M876 597.500h447"/>
        <path stroke="#fff" d="M544.500 500v97M783.500 497v100"/>
      </g>
      <g class="thin" stroke="#008000">
        <path d="M405 518L316 638M316 602L375 594M347 598L427 657M397 662L456 653M468 600L414 675"/>
        <path d="M560 195L630 289M572 195L565 239M589 195L570 208M684 195L710 229"/>
        <path d="M1152 308L1195 351M1152 576L1195 619"/>
      </g>
      <g class="thin" stroke="#fff"><path d="M584 277L663 335L739 271M471 471L531 517M799 517L876 455M922 517L876 597M842 577L858 597"/></g>
      <g class="thin" stroke="#800000"><path d="M629 288L842 577M710 229L922 517M405 517L617 229"/></g>
      <text class="bar" transform="translate(466 471) rotate(-54)">FBZJ-1:C22@100</text>
      <g fill="none" stroke="#000" stroke-width="3"><path d="M617 230H710L726 252"/><path d="M405 517L451 597"/></g>
      <path d="M617 229.500H710L726 252M471 597.500H451L405 517" fill="none" stroke="#fff" stroke-width="4" stroke-dasharray="9 7"/>
      <path d="M405 517L617 229.500M726 252L471 597.500" fill="none" stroke="#fff" stroke-width="3" stroke-dasharray="10 9"/>
      <path d="M405 517L617 229M700 287L471 597" class="thin" stroke="#800000"/>
      <g fill="none" stroke="#ff0" stroke-width="2">
        <path d="M648 235L657 230L897 556M897 554V562L893 565M432 554V564H897M703 498.500H713V598H703"/>
        <path d="M560 309L555 317L636 374L640 368M703 389L709 395L783 331L777 324"/>
      </g>
      <path d="M653 224L660 230L424 550L416 545" fill="none" stroke="#0080ff" stroke-width="2"/>
      <g class="crisp" fill="none" stroke="#f0f" stroke-width="2"><path d="M527 361V352H800V362M734 249H724V598H734M1110 195V268H1120"/></g>
      <g class="crisp">
        <path fill="#fff" d="M613 226h8v8h-8zM659 226h8v8h-8zM706 226h8v8h-8zM716 237h6v8h-6zM722 248h8v8h-8zM507 370h7v6h-7zM401 514h8v8h-8zM424 554h7v7h-7zM447 594h8v8h-8zM457 594h8v8h-8zM468 594h8v8h-8z"/>
        <path fill="#484848" d="M615 230h6v4h-6zM662 230h6v6h-6zM709 230h5v4h-5zM714 238h5v7h-5zM595 421h8v8h-8zM511 374h5v6h-5zM427 557h4v4h-4zM459 595h7v4h-7z"/>
        <path stroke="#7fffff" d="M613 230h8M617.500 226v8M706 230l8 4M722 252h8M726.500 248v8M597 427l4-5M403 517h6M449 597.500h6M472.500 594v8"/>
        <path stroke="#0f0" d="M723 249.500h7M723.500 249v8"/>
      </g>
      <g class="thin" stroke="#008000">
        <path id="b" d="M346 208l-4 9-9 4-9-4-4-9 4-9 9-4 9 4z"/>
        <use href="#b" x="330"/><use href="#b" x="660"/><use href="#b" x="990"/>
        <use href="#b" x="-145" y="121"/><use href="#b" x="-145" y="389"/><use href="#b" x="528" y="121"/><use href="#b" x="528" y="389"/>
      </g>
      <g class="ax">
        <text x="333" y="214">5</text><text x="664" y="214">6</text><text x="994" y="214" fill="#777">7</text><text x="1323" y="214" class="heavy">8</text>
        <text x="188" y="335">C</text><text x="188" y="603">B</text><text x="861" y="335">C</text><text x="861" y="603" fill="#777">B</text>
        <text transform="translate(1079 376) rotate(-90)">13600</text>
        <text transform="translate(1229 462) rotate(-90)">2680</text>
        <text transform="translate(1229 656) rotate(-90)">1200</text>
        <text transform="translate(384 633) rotate(37)">1000</text>
      </g>
      <path d="M230 625V590" stroke="#0f0" stroke-width="4"/><path d="M226 590l4-14 4 14z" fill="#0f0"/>
      <path d="M230 625H268" stroke="#f00" stroke-width="4"/><path d="M266 621l13 4-13 4z" fill="#f00"/>
      <path d="M239 579l5 5 5-5M244 584v4" stroke="#0f0" fill="none"/><path d="M267 604l9 9M276 604l-9 9" stroke="#f00"/>
    </svg>

    <div class="row snapbar">
      <div class="tb"><i class="hand"></i>
        <button class="t"><svg class="i"><use href="#ortho"/></svg>正交</button>
        <button class="t on"><svg class="i"><use href="#snap"/></svg>对象捕捉</button>
        <button class="t"><svg class="i"><use href="#dyn"/></svg>动态输入</button>
      </div>
      <div class="tb"><i class="hand"></i>
        <button class="t"><svg class="i"><use href="#cross"/></svg>交点</button>
        <button class="t on"><svg class="i"><use href="#perp"/></svg>垂点</button>
        <button class="t on"><svg class="i"><use href="#mid"/></svg>中点</button>
        <button class="t"><svg class="i"><use href="#vertex"/></svg>顶点</button>
        <button class="t"><svg class="i"><use href="#coord"/></svg>坐标</button>
      </div>
      <div class="tb offs"><i class="hand"></i>
        <label class="combo s"><select aria-label="偏移方式"><option>不偏移</option></select></label>
        <i class="sep"></i>
        <label for="ox">X=</label><span class="spin"><input id="ox" value="0"><button aria-label="增减"></button></span><span class="unit">mm</span>
        <label for="oy">Y=</label><span class="spin"><input id="oy" value="0"><button aria-label="增减"></button></span><span class="unit">mm</span>
        <i class="sep"></i>
        <label class="rotck"><input type="checkbox">旋转</label>
        <span class="spin wide"><input aria-label="旋转角度" value="0.000"><button aria-label="增减"></button></span><span class="unit">°</span>
      </div>
    </div>
  </section>
</main>

<footer class="status">
  <span class="c1"><tt>X=143012 Y=10595</tt></span>
  <span class="c2">层高<tt>:2.15m</tt></span>
  <span class="c3">底标高<tt>:-2.2m</tt></span>
  <span class="c4"><tt>1(27)</tt></span>
  <span class="c5">按鼠标左键指定第一个角点，或拾取构件图元</span>
  <span class="c6"><tt>424.5 FPS</tt></span>
</footer>

<div class="taskbar">
  <button class="start" aria-label="开始"><svg viewBox="0 0 16 16"><path d="M0 2l7-1v6.500H0zM8 1l8-1v7.500H8zM0 8.500h7V15l-7-1zM8 8.500h8V16l-8-1z" fill="#fff"/></svg></button>
  <label class="search"><svg class="ring" viewBox="0 0 24 24"><circle cx="12" cy="12" r="9.500" fill="none" stroke="#f4f4f4" stroke-width="2.500"/></svg><input placeholder="在这里输入你要搜索的内容" aria-label="搜索"><svg class="mic" viewBox="0 0 16 20"><rect x="5.500" y="1.500" width="5" height="11" rx="2"/><path d="M2.500 9v5h11V9M8 14v5"/></svg></label>
  <div class="apps">
    <button aria-label="任务视图"><svg viewBox="0 0 24 24" fill="none" stroke="#fff"><rect x="6.500" y="5.500" width="11" height="13" stroke-width="1.500"/><path d="M4 6.500H2.500v11H4M20 6.500h1.500v11H20"/></svg></button>
    <button aria-label="应用"><svg viewBox="0 0 24 24" fill="#e8e8e8"><path d="M12 12Q1 13 2 6q1-5 7-4 5 2 3 10zM12 12q-1-11 6-10 5 1 4 7-2 5-10 3zM12 12q11-1 10 6-1 5-7 4-5-2-3-10zM12 12q1 11-6 10-5-1-4-7 2-5 10-3z" stroke="#000c10"/></svg></button>
    <button aria-label="浏览器"><svg viewBox="0 0 24 24" fill="none" stroke="#f0f0f0"><path d="M6 13h13q0-7-7-7t-7 7q0 7 7 7 5 0 7-4" stroke-width="3.500"/><path d="M3 22Q-1 18 10 7q8-6 12-5 2 2-2 6" stroke-width="1.500"/></svg></button>
    <button aria-label="提醒"><svg viewBox="0 0 28 24"><path d="M12 14q-1-2 1-2 3 1 2 4-2 3-5 1-4-3-1-7 4-3 8 0 3 5 0 9-4 4-9 2-6-3-5-9 2-7 9-7" fill="none" stroke="#ddd" stroke-width="1.300"/><path d="M16 10q2-1 2-5 0-4 4-5 3 1 4 5 0 4 2 5z" fill="#f0b000"/><circle cx="22" cy="11" r="1.500" fill="#f0b000"/></svg></button>
    <button aria-label="Edge"><svg viewBox="0 0 24 24"><path d="M2 11Q4 1 13 1q9 1 9 10v3H9q1 5 6 5 4 0 6-1v4q-3 2-8 2-9-1-9-9 0-5 5-8-5 1-7 4zM9 10h7q0-4-3-4-3 0-4 4z" fill="#0a78d8" fill-rule="evenodd"/></svg></button>
    <button aria-label="IE"><svg viewBox="0 0 24 24" fill="none"><path d="M6 13h13q0-7-7-7t-7 7q0 7 7 7 5 0 7-4" stroke="#4cb8f0" stroke-width="4"/><path d="M3 22Q-1 18 10 7q8-6 12-5 2 2-2 6" stroke="#f6c830" stroke-width="2"/></svg></button>
    <button class="run" aria-label="资源管理器"><svg viewBox="0 0 24 24"><path d="M1 3h8l2 3h12v15H1z" fill="#fbe294"/><path d="M1 3h8l1 3H1z" fill="#e8b030"/><path d="M5 22v-9h14v9h-4v-4H9v4z" fill="#3aa8e0"/></svg></button>
    <button class="run" aria-label="广联达"><svg viewBox="0 0 24 24"><path d="M23 2q-3 5-9 5-6 1-6 6 1 5 6 5 4-1 5-5h-5q2-4 9-3-1 13-11 13-9-1-10-9 0-9 8-12 5-1 8 1 3 0 5-1z" fill="#1e90f4"/><path d="M22 3Q10 0 4 9" fill="none" stroke="#7cd0ff" stroke-width="1.300"/></svg></button>
    <button class="run" aria-label="绿色浏览器"><svg viewBox="0 0 24 24"><circle cx="12" cy="12" r="9.500" fill="#4db828" stroke="#e4f8d0" stroke-width="1.500"/><path d="M7 13h10q0-5-5-5t-5 5q0 5 5 5 3 0 5-3" fill="none" stroke="#fff" stroke-width="2.500"/><path d="M2 22Q5 6 22 1" stroke="#2a9018" stroke-width="2" fill="none"/></svg></button>
    <button class="run active" aria-label="GGJ"><svg><use href="#applogo"/></svg></button>
    <button class="run" aria-label="图片"><svg viewBox="0 0 24 24"><rect width="24" height="24" rx="3" fill="#1878d8"/><path d="M3 8q5-2 9 1 4-3 9-1v11q-5-2-9 1-4-3-9-1z" fill="#f4f4f0" stroke="#b89060"/><circle cx="13" cy="8" r="4" fill="#c0e4fa" stroke="#5a8ab0" stroke-width="1.500"/><path d="M16 11l5 6" stroke="#c88030" stroke-width="2.500"/></svg></button>
  </div>
  <div class="tray">
    <span class="links">链接</span>
    <span class="two cpu">51%<br>CPU使用</span>
    <svg class="n1" viewBox="0 0 16 16"><path d="M2 11l6-6 6 6"/></svg>
    <svg class="n1" viewBox="0 0 16 16"><path d="M4 5.500h10.500v7H4M2 3v3M5 3v3M1 6h5v2q-1 2-4 0z"/><rect x="6" y="7" width="7" height="4" fill="#fff"/></svg>
    <svg class="n1" viewBox="0 0 16 16"><path d="M2 14A12 12 0 0 1 14 2M5 14a9 9 0 0 1 9-9M8 14a6 6 0 0 1 6-6" stroke="#bbb"/><circle cx="12.500" cy="12.500" r="1.500" fill="#fff"/></svg>
    <svg class="n1" viewBox="0 0 16 16"><path d="M1 6h3l4-4v12l-4-4H1zM10 5q2 3 0 6M12 3.500q3 4.500 0 9"/><path d="M14 2q4 6 0 12" stroke="#777"/></svg>
    <svg class="kb" viewBox="0 0 24 14"><rect x=".5" y=".5" width="22" height="12"/><path d="M3 4h18M3 7h18" stroke-dasharray="2 1"/><path d="M6 10h11"/></svg>
    <b>英</b>
    <svg class="n1 sogou" viewBox="0 0 16 16"><path d="M1 3l12-2 2 12-12 2z" fill="#f04a18" stroke="none"/><path d="M12 4Q5 4 5 6t4 2 2 3-6 1" stroke="#fff" stroke-width="2"/></svg>
    <span class="two clock">21:24<br>2018/4/2</span>
    <button class="note" aria-label="通知"><svg viewBox="0 0 26 24"><path d="M2 2h16v13H8l-3 4v-4H2z" fill="#fff"/><path d="M5 5.500h10M5 8.500h10M5 11.500h7" stroke="#000c10"/><circle cx="17" cy="15" r="8" fill="#444" stroke="#888"/><text x="17" y="20">1</text></svg></button>
  </div>
</div>
</body>
</html>
```

FILE: styles.css
```css
* { box-sizing: border-box; }
body {
  margin: 0;
  height: 100vh;
  display: flex;
  flex-direction: column;
  overflow: hidden;
  background: #f0f0f0;
  color: #000;
  font: 12px/16px "Noto Sans", "Noto Sans CJK SC", sans-serif;
}
button, input, select { font: inherit; color: inherit; }
button { border: 0; background: none; padding: 0; white-space: nowrap; flex: none; }
svg { display: block; flex: none; }
.sprite { position: absolute; width: 0; height: 0; }
.i { width: 16px; height: 16px; }
tt { font: 10px/16px "DejaVu Sans Mono", monospace; }

/* title bar */
.titlebar { position: relative; display: flex; align-items: center; height: 23px; flex: none; background: #fff; padding: 0 4px 0 3px; gap: 5px; }
.titlebar h1 { flex: 1; margin: 0; font: 400 12px/16px Inter, "Noto Sans CJK SC", sans-serif; white-space: nowrap; }
.win { width: 41px; height: 20px; align-self: flex-start; display: grid; place-items: center; }
.win svg { width: 12px; height: 12px; fill: none; stroke: #000; }
.ball {
  position: absolute; right: 206px; top: -28px; width: 46px; height: 46px; z-index: 2;
  border-radius: 50%; background: #3cc060; border: 2px solid #ddd; outline: 1px solid #bbb;
  box-shadow: 0 1px 4px #888; color: #fff; font-weight: 700; text-align: center; padding-top: 25px; line-height: 16px;
}

/* menus */
.menubar { position: relative; display: flex; align-items: center; height: 30px; flex: none; padding-left: 2px; gap: 1px; }
.menubar > button { padding: 0 5px; }
.menubar > .t { padding: 0 4px; }
.menubar > .dd { padding: 0; }
.tip { flex: 1; height: 26px; line-height: 26px; padding-left: 29px; background: #f8f8f8; color: #663300; text-decoration: none; white-space: nowrap; overflow: hidden; }
.account { display: flex; align-items: center; width: 239px; height: 28px; margin-left: 1px; background: #f6f6f6; }
.beans { margin-left: 6px; white-space: nowrap; }
.bellbtn { margin-left: 8px; }
.more { margin-left: auto; align-self: flex-start; width: 22px; font-size: 16px; line-height: 14px; font-weight: 600; }
.ime {
  position: absolute; left: 177px; top: 6px; width: 183px; height: 24px; display: flex; align-items: center; justify-content: space-between;
  padding: 0 4px 0 9px; background: #fff; border: 1px solid #b4c6dc; color: #1c6cc0; fill: #1c6cc0; font-size: 15px; z-index: 1;
}
.ime svg { width: 16px; height: 16px; }
.ime .imelogo { position: absolute; left: -25px; top: -5px; width: 28px; height: 28px; }
.ime .pale { fill: #b0b8cc; }

/* tool bars */
.tb { display: flex; align-items: center; background: linear-gradient(#fcfcfc, #f0f0f0); border-radius: 3px; }
.t { display: flex; align-items: center; gap: 4px; padding: 0 4px; height: 24px; }
.t:disabled { color: #8c8c8c; }
.t.on { background: #deebf7; outline: 1px solid #0078d7; outline-offset: -1px; height: 23px; }
.t.deep { background: #b4d6f3; }
.dd { width: 10px; height: 20px; display: grid; place-items: center; }
.dd::after, .drop::after, .combo::after {
  content: ""; display: block; width: 0; height: 0;
  border: 3px solid transparent; border-top: 4px solid #000; border-bottom: 0;
}
.dd.gray::after, .drop:disabled::after, .boxed::after { border-top-color: #777; }
.drop::after { margin: 0 0 0 -1px; }
.sep { width: 1px; height: 16px; margin-left: 4px; background: #c0c0c0; flex: none; }
.hand { width: 3px; height: 15px; margin: 0 1px 0 3px; flex: none; background: repeating-linear-gradient(#c0c0c0 0 2px, transparent 2px 4px); }
.combo { display: flex; align-items: center; width: 70px; height: 24px; margin-right: 2px; padding: 0 4px 0 2px; background: #fff; flex: none; }
.combo.s { width: 57px; }
.combo select { flex: 1; width: 0; appearance: none; border: 0; padding: 0; background: none; }

.maintools { display: flex; height: 31px; flex: none; gap: 3px; }
.maintools .tb { height: 30px; margin-top: 1px; padding-bottom: 4px; }
.maintools .sep { height: 20px; }
.file { width: 151px; }
.file .sep { margin-left: 0; margin-right: 4px; }
.file .t { padding-left: 5px; padding-right: 3px; }
.file .more { width: 16px; }
.calc { width: 548px; padding-right: 3px; }
.view { flex: 1; }
.combo.dim { width: 62px; gap: 3px; margin-right: 0; }

/* navigation panel */
.work { flex: 1; min-height: 0; display: flex; gap: 5px; }
.side { width: 170px; flex: none; display: flex; flex-direction: column; padding-bottom: 3px; }
.side header { display: flex; align-items: center; gap: 8px; height: 16px; margin-bottom: 1px; padding-right: 4px; background: #0050e0; color: #fff; font-size: 13px; line-height: 14px; }
.side header svg { width: 10px; height: 10px; fill: none; stroke: #fff; }
.pin { margin-left: auto; }
.sec { height: 22px; border: 1px solid #a0a0a0; border-left-color: #fff; border-top-color: #fff; background: #f0f0f0; text-align: center; width: 169px; margin-left: 1px; }
.expand { display: flex; gap: 7px; padding: 5px 6px 0; height: 27px; border-left: 2px solid #e0e0e0; border-right: 1px solid #a0a0a0; }
.expand svg { width: 16px; height: 16px; fill: none; }
.treebox { flex: 1; min-height: 0; display: flex; margin: 0 2px 2px; padding: 0 1px 1px 0; border: 1px solid #828790; border-width: 2px 1px; background: #fff; }
.tree, .tree ul { list-style: none; margin: 0; padding: 0; }
.tree { flex: 1; overflow: hidden; }
.tree li { position: relative; white-space: nowrap; }
.tree svg.f { width: 16px; height: 14px; }
.tree > li > span { display: flex; align-items: center; gap: 5px; height: 16px; padding-left: 23px; }
.tree > li > span::before { content: ""; position: absolute; left: 8px; top: 4px; width: 5px; height: 5px; border: solid #999; border-width: 2px 2px 0 0; transform: rotate(45deg); }
.tree > .open > span::before { border-color: #404040; transform: rotate(135deg); top: 3px; left: 9px; }
.tree > .last > span::before { display: none; }
.tree ul { margin-left: 12px; border-left: 1px dotted #888; }
.tree ul li { display: flex; align-items: center; height: 16px; padding-left: 30px; }
.tree ul li svg { margin-right: 4px; }
.tree ul li::before { content: ""; position: absolute; left: 19px; top: 0; width: 10px; height: 8px; border: dotted #888; border-width: 0 0 1px 1px; }
.tree ul li:not(:last-child)::after { content: ""; position: absolute; left: 19px; top: 8px; height: 8px; border-left: 1px dotted #888; }
.cur em { font-style: normal; background: #d9d9d9; margin-left: -4px; padding: 0 6px 0 4px; }
.tree mark { background: #ffd800; font-weight: 700; }
.scroll { width: 16px; display: flex; flex-direction: column; background: #f0f0f0; }
.scroll button { height: 16px; display: grid; place-items: center; }
.scroll svg { width: 10px; height: 10px; fill: none; stroke: #505050; stroke-width: 2; }
.track { flex: 1; }
.thumb { height: 97%; background: #cdcdcd; }

/* drawing area */
.stage { flex: 1; min-width: 0; display: flex; flex-direction: column; }
.row { display: flex; flex: none; padding-left: 1px; }
.edit { height: 27px; }
.edit .tb { height: 26px; padding-right: 1px; }
.comp { height: 28px; padding-top: 1px; }
.comp .tb { height: 25px; padding-right: 1px; }
.comp .hand { margin-right: 2px; }
.comp .sep { margin-left: 2px; margin-right: 2px; }
.comp .t { padding-right: 3px; }
.draw { height: 29px; gap: 2px; padding-right: 2px; }
.draw .tb:first-child { flex: 1; height: 28px; }
.draw .combo ~ .t { padding-right: 3px; }
.draw .combo ~ .bare { padding-left: 8px; }
.draw .more { width: 14px; }
.stub { width: 32px; }
.aux { height: 27px; padding-left: 646px; }
.aux .tb { height: 26px; padding-right: 4px; }
.combo.boxed { width: 56px; height: 23px; margin: 0 1px 0 2px; border: 1px solid #7a7a7a; background: #f4f4f4; }
.cad { flex: 1; min-height: 0; width: 100%; background: #000; }
.crisp, .thin { shape-rendering: crispEdges; }
.thin { fill: none; }
.bar { font: 20px "DejaVu Sans Mono", monospace; fill: #606060; }
.ax { font: 16px Roboto, sans-serif; fill: #d0d0d0; text-anchor: middle; }
.heavy { font-weight: 700; }
.snapbar { height: 33px; gap: 1px; padding-bottom: 2px; }
.snapbar .tb { padding-right: 1px; }
.snapbar .t { padding-right: 3px; }
.offs label:not(.combo), .unit { color: #808080; font-size: 13px; margin: 0 2px; }
.spin { display: flex; align-items: center; width: 57px; height: 23px; border: 1px solid #7a7a7a; }
.spin.wide { width: 67px; }
.spin input { flex: 1; width: 0; border: 0; background: none; text-align: right; color: #808080; padding: 0 12px 0 0; }
.spin button { width: 12px; height: 19px; display: flex; flex-direction: column; justify-content: space-between; padding: 2px 3px; }
.spin button::before, .spin button::after { content: ""; width: 0; border: 3px solid transparent; border-bottom: 4px solid #606060; border-top: 0; }
.spin button::after { border-top: 4px solid #606060; border-bottom: 0; }
.offs .rotck { display: flex; align-items: center; gap: 8px; color: #000; font-size: 12px; }
.rotck input { appearance: none; width: 12px; height: 12px; margin: 0; border: 1px solid #a0a0a0; }

/* status line */
.status { display: flex; gap: 2px; height: 20px; flex: none; padding: 1px 0; }
.status span { border: 1px solid #d0d0d0; background: #f8f8f8; padding-left: 1px; white-space: nowrap; overflow: hidden; }
.c1 { width: 148px; }
.c2 { width: 78px; }
.c3 { width: 98px; }
.c4 { width: 48px; }
.c5 { flex: 1; }
.c6 { width: 70px; }

/* desktop task bar */
.taskbar { display: flex; height: 40px; flex: none; background: #000c10; color: #fff; }
.start { width: 48px; display: grid; place-items: center; }
.start svg { width: 16px; height: 16px; }
.search { width: 344px; flex: none; display: flex; align-items: center; background: #333; padding: 0 12px 0 7px; gap: 5px; }
.search .ring { width: 24px; height: 24px; }
.search .mic { width: 16px; height: 20px; fill: none; stroke: #999; }
.search input { flex: 1; border: 0; background: none; padding: 0; font-size: 14px; }
.search input::placeholder { color: #999; }
.apps { display: flex; justify-content: space-between; width: 545px; flex: none; }
.apps button { width: 48px; height: 40px; display: grid; place-items: center; border-bottom: 2px solid transparent; padding-top: 1px; }
.apps svg { width: 24px; height: 24px; }
.apps .run { border-image: linear-gradient(90deg, transparent 4px, #76b9ed 4px 44px, transparent 44px) 2; }
.apps .active { background: #343d40; border-image: none; border-bottom-color: #76b9ed; }
.tray { flex: 1; display: flex; align-items: center; justify-content: flex-end; gap: 8px; }
.tray svg { fill: none; stroke: #fff; }
.n1 { width: 16px; height: 16px; }
.sogou { margin-left: 7px; }
.kb { width: 24px; height: 14px; }
.tray b { font-weight: 500; }
.two { text-align: center; line-height: 18px; white-space: nowrap; }
.cpu { margin: 0 10px 0 8px; }
.clock { margin-left: 13px; }
.note { width: 40px; margin-left: 12px; padding-left: 4px; height: 40px; border-right: 1px solid #555; margin-right: 4px; }
.note svg { width: 26px; height: 24px; stroke: none; }
.note text { fill: #fff; font-size: 12px; text-anchor: middle; }
```
